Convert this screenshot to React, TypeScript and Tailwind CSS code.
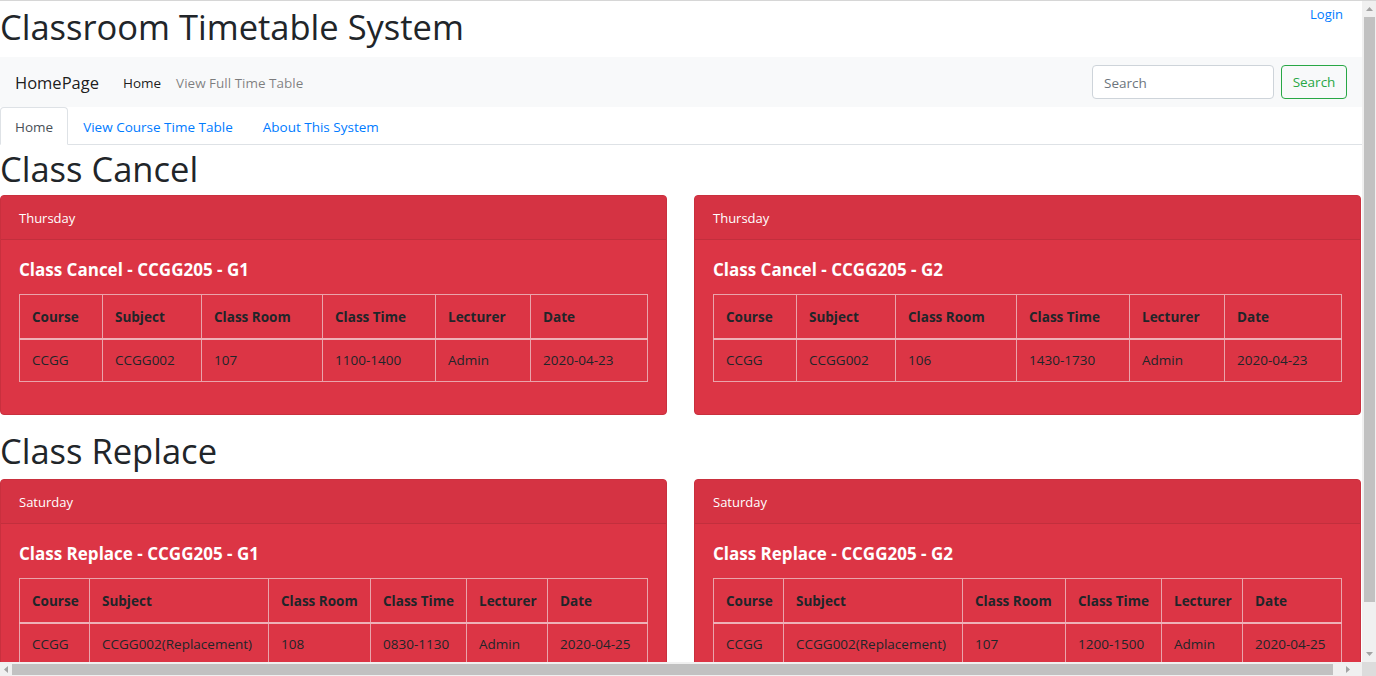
import React from "react";

type Card = {
  day: string;
  title: string;
  cols: number[];
  row: string[];
};

const headers = ["Course", "Subject", "Class Room", "Class Time", "Lecturer", "Date"];

const cancelCards: Card[] = [
  {
    day: "Thursday",
    title: "Class Cancel - CCGG205 - G1",
    cols: [83, 99, 121, 113, 95, 117],
    row: ["CCGG", "CCGG002", "107", "1100-1400", "Admin", "2020-04-23"],
  },
  {
    day: "Thursday",
    title: "Class Cancel - CCGG205 - G2",
    cols: [83, 99, 121, 113, 95, 117],
    row: ["CCGG", "CCGG002", "106", "1430-1730", "Admin", "2020-04-23"],
  },
];

const replaceCards: Card[] = [
  {
    day: "Saturday",
    title: "Class Replace - CCGG205 - G1",
    cols: [70, 179, 102, 96, 81, 100],
    row: ["CCGG", "CCGG002(Replacement)", "108", "0830-1130", "Admin", "2020-04-25"],
  },
  {
    day: "Saturday",
    title: "Class Replace - CCGG205 - G2",
    cols: [70, 179, 103, 96, 81, 99],
    row: ["CCGG", "CCGG002(Replacement)", "107", "1200-1500", "Admin", "2020-04-25"],
  },
];

function TimeCard({ card }: { card: Card }) {
  return (
    <div className="rounded-[4px] border border-[#c9303e] bg-[#dc3545] overflow-hidden">
      <div className="h-[44px] border-b border-[#c22f3d] bg-[#d53343] px-[18px] pt-[2px] flex items-center text-[13px] text-white">
        {card.day}
      </div>
      <div className="px-[18px] pt-[18px] pb-[32px]">
        <div className="h-[24px] leading-[24px] mb-[12px] text-[17px] font-bold text-white">{card.title}</div>
        <table className="w-[628px] table-fixed border-collapse text-[13.5px] text-[#212529]">
          <colgroup>
            {card.cols.map((w, i) => (
              <col key={i} style={{ width: w }} />
            ))}
          </colgroup>
          <thead>
            <tr>
              {headers.map((h) => (
                <th
                  key={h}
                  className="h-[44px] border border-[#eaa4ab] border-b-2 border-b-[#eeb1b7] px-[12px] pt-[2px] text-left font-bold align-middle whitespace-nowrap"
                >
                  {h}
                </th>
              ))}
            </tr>
          </thead>
          <tbody>
            <tr>
              {card.row.map((c, i) => (
                <td key={i} className="h-[43px] border border-[#eaa4ab] px-[12px] align-middle whitespace-nowrap">
                  {c}
                </td>
              ))}
            </tr>
          </tbody>
        </table>
      </div>
    </div>
  );
}

function Arrow({ dir }: { dir: "up" | "down" | "left" | "right" }) {
  const pts =
    dir === "up"
      ? "0,4 3.5,0 7,4"
      : dir === "down"
      ? "0,0 7,0 3.5,4"
      : dir === "left"
      ? "4,0 4,7 0,3.5"
      : "0,0 0,7 4,3.5";
  const w = dir === "up" || dir === "down" ? 7 : 4;
  const h = dir === "up" || dir === "down" ? 4 : 7;
  return (
    <svg width={w} height={h} viewBox={`0 0 ${w} ${h}`}>
      <polygon points={pts} fill="#a3a3a3" />
    </svg>
  );
}

export default function App() {
  return (
    <div className="w-[1376px] h-[676px] flex flex-col overflow-hidden bg-white font-['Open_Sans',sans-serif] text-[#212529]">
      <div className="h-px bg-[#d6d6d6] shrink-0" />
      <div className="flex h-[661px] shrink-0">
        <div className="relative w-[1362px] h-[661px] overflow-hidden">
          <a className="absolute top-[1px] right-[19px] text-[13px] leading-[24px] text-[#007bff]">Login</a>
          <h1 className="h-[48px] mb-[8px] text-[34.5px] leading-[52px] font-medium whitespace-nowrap">
            Classroom Timetable System
          </h1>

          <nav className="h-[50px] bg-[#f8f9fa] flex items-center pl-[15px] pr-[15px]">
            <span className="text-[16.5px] text-black/90 mr-[24px] pt-[2px]">HomePage</span>
            <a className="text-[13.5px] text-black/90 mr-[15px] pt-[2px]">Home</a>
            <a className="text-[13.5px] text-black/50 pt-[2px]">View Full Time Table</a>
            <div className="ml-auto flex items-center gap-[7px]">
              <div className="w-[182px] h-[34px] rounded-[4px] border border-[#ced4da] bg-white flex items-center px-[11px] pt-[2px] text-[13.5px] text-[#6c757d]">
                Search
              </div>
              <button className="w-[66px] h-[34px] rounded-[4px] border border-[#28a745] pt-[1px] text-[13.5px] text-[#28a745] flex items-center justify-center">
                Search
              </button>
            </div>
          </nav>

          <div className="h-[38px] flex items-end border-b border-[#dee2e6]">
            <div className="h-[38px] -mb-px px-[14px] pt-[3px] flex items-center rounded-t-[4px] border border-[#dee2e6] border-b-white bg-white text-[13.5px] text-[#495057]">
              Home
            </div>
            <a className="h-[37px] px-[15px] pt-[3px] flex items-center text-[13.5px] text-[#007bff]">View Course Time Table</a>
            <a className="h-[37px] px-[15px] pt-[3px] flex items-center text-[13.5px] text-[#007bff]">About This System</a>
          </div>

          <h1 className="h-[50px] text-[34.5px] leading-[48px] font-medium">Class Cancel</h1>
          <div className="grid grid-cols-[667px_667px] gap-[27px]">
            {cancelCards.map((c) => (
              <TimeCard key={c.title} card={c} />
            ))}
          </div>

          <h1 className="mt-[11px] h-[53px] text-[34.5px] leading-[50px] font-medium">Class Replace</h1>
          <div className="grid grid-cols-[667px_667px] gap-[27px]">
            {replaceCards.map((c) => (
              <TimeCard key={c.title} card={c} />
            ))}
          </div>
        </div>

        <div className="w-[14px] h-[661px] bg-[#f0f0f0] flex flex-col items-center">
          <div className="h-[16px] flex items-center justify-center">
            <Arrow dir="up" />
          </div>
          <div className="w-[11px] h-[585px] bg-[#c1c1c1]" />
          <div className="flex-1 flex items-end justify-center pb-[6px]">
            <Arrow dir="down" />
          </div>
        </div>
      </div>

      <div className="flex h-[14px] shrink-0">
        <div className="w-[1362px] h-[14px] bg-[#f0f0f0] flex items-center">
          <div className="w-[12px] flex justify-center">
            <Arrow dir="left" />
          </div>
          <div className="w-[1321px] h-[11px] bg-[#c1c1c1]" />
          <div className="flex-1 flex justify-center">
            <Arrow dir="right" />
          </div>
        </div>
        <div className="w-[14px] h-[14px] bg-[#dcdcdc]" />
      </div>
    </div>
  );
}
